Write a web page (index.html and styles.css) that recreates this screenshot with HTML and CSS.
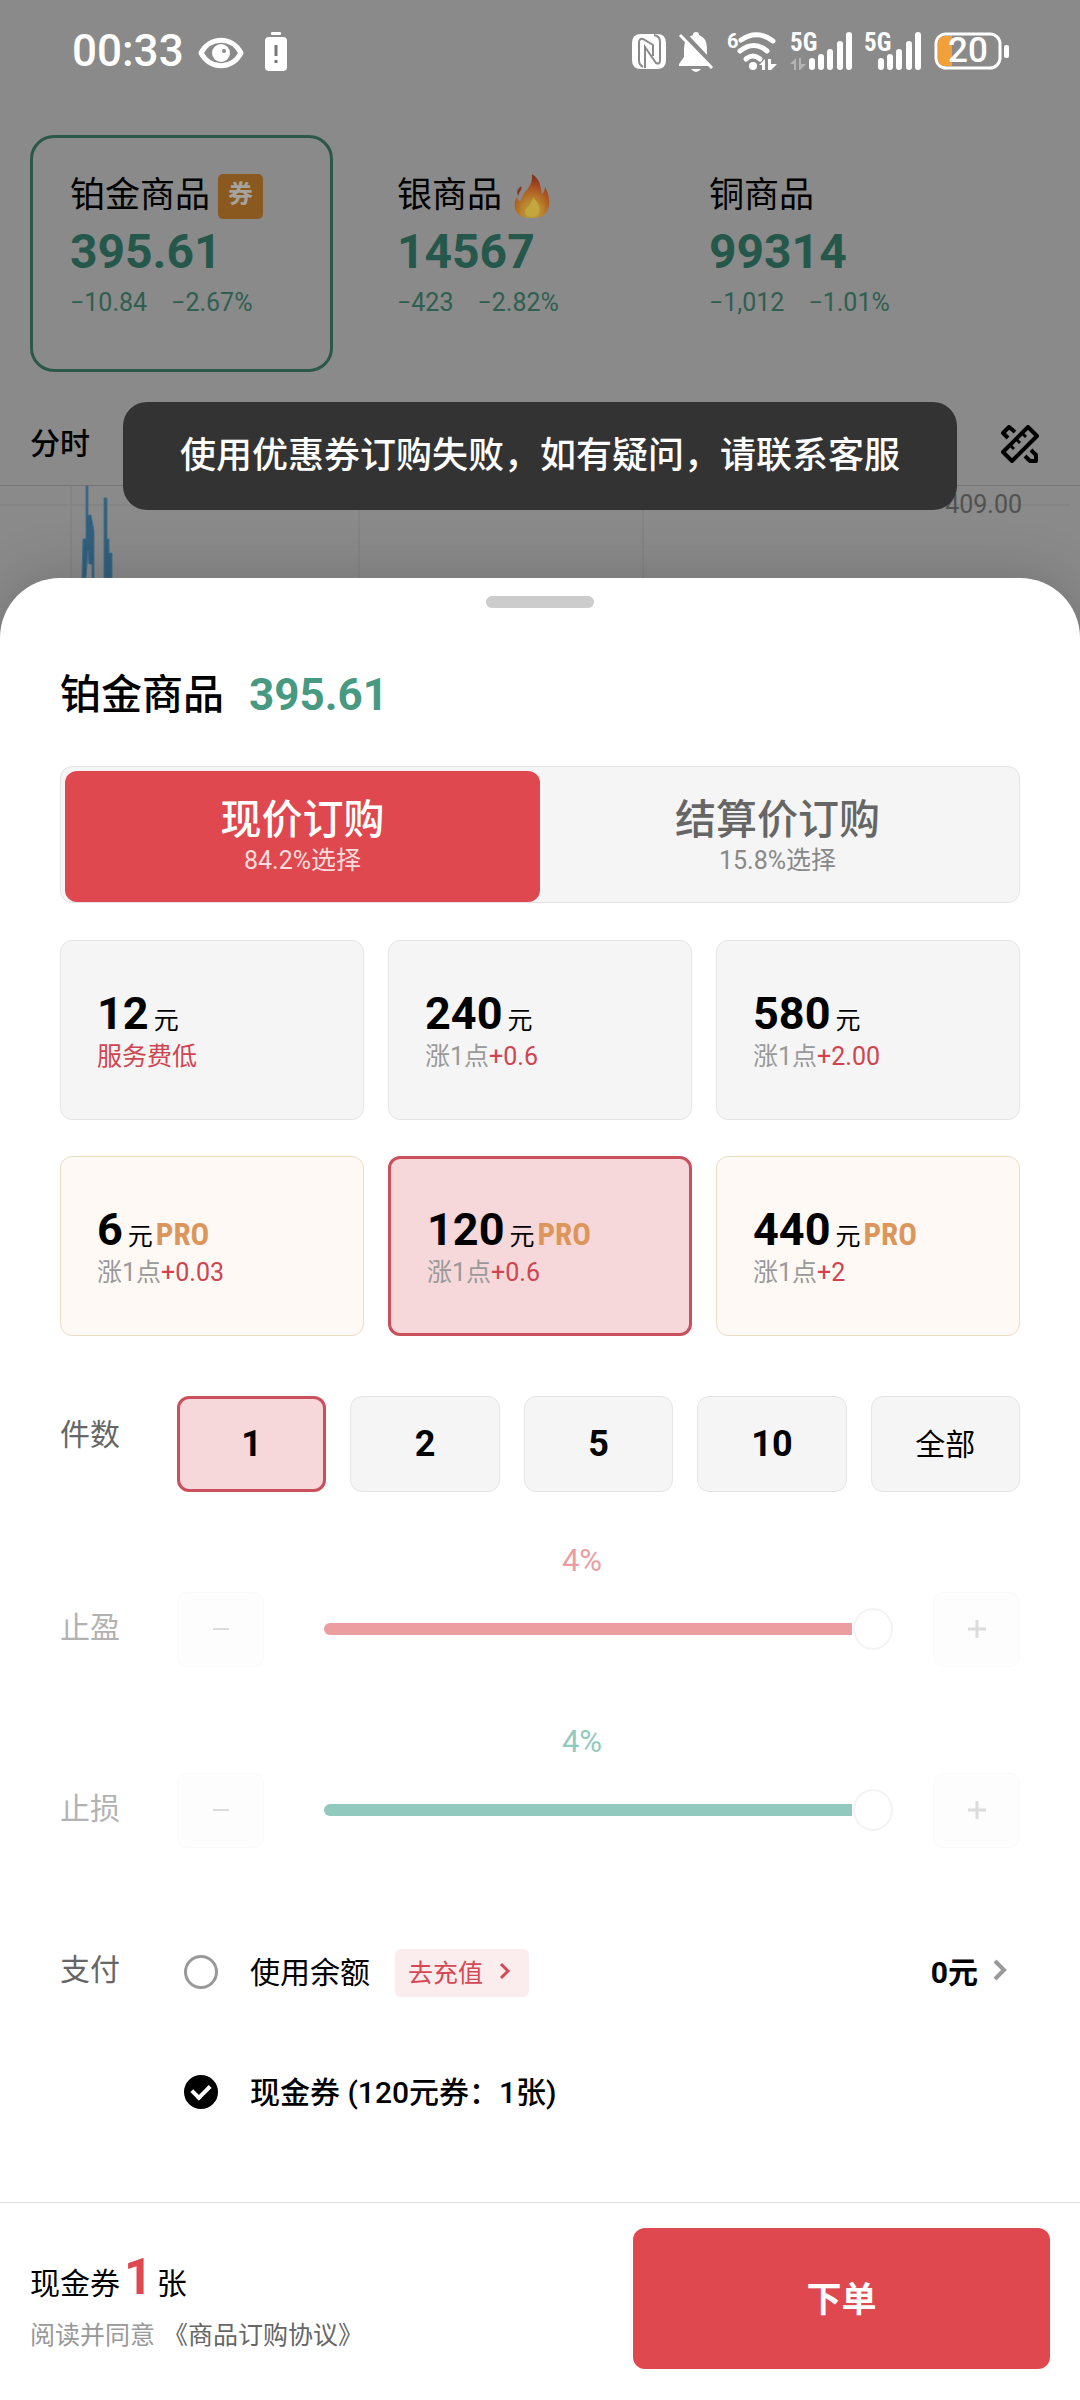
FILE: index.html
```html
<!DOCTYPE html>
<html lang="zh-CN">
<head>
<meta charset="utf-8">
<meta name="viewport" content="width=device-width, initial-scale=1">
<title>铂金商品</title>
<link rel="stylesheet" href="styles.css">
</head>
<body>
<div class="page">
  <section class="market">
    <header class="status">
      <span class="clock">00:33</span>
      <svg class="status-eye" width="46" height="42" viewBox="0 0 46 42">
        <path d="M3 23C12 6 34 6 43 23C34 40 12 40 3 23Z" fill="none" stroke="#fff" stroke-width="5" stroke-linejoin="round"/>
        <circle cx="23" cy="23" r="9" fill="#fff"/><circle cx="26" cy="21" r="2" fill="#8a8a8a"/>
      </svg>
      <svg class="status-alert" width="24" height="42" viewBox="0 0 24 42">
        <rect x="7" y="2" width="10" height="3" rx="1" fill="#fff"/><rect x="1" y="7" width="22" height="34" rx="4" fill="#fff"/>
        <path d="M12 15V26M12 30V33" stroke="#777" stroke-width="3"/>
      </svg>
      <div class="status-icons">
        <svg width="34" height="42" viewBox="0 0 34 42">
          <path d="M9 4H25Q34 4 34 13V30Q34 39 25 39H9Q0 39 0 30V13Q0 4 9 4Z" fill="#fff"/>
          <path d="M13 38V17L24 33Q28 35 28 30V12Q28 6 22 5M21 26V15L11 9Q7 8 7 13V30Q7 35 11 37" fill="none" stroke="#8a8a8a" stroke-width="2"/>
        </svg>
        <svg width="36" height="42" viewBox="0 0 36 42">
          <path d="M18 2Q21 2 21 5Q29 8 29 18V27L33 34V36H1V34L6 27V18Q6 8 15 5Q15 2 18 2Z" fill="#fff"/>
          <path d="M13 39H23Q18 45 13 39Z" fill="#fff"/>
          <path d="M4 2L37 37" stroke="#8a8a8a" stroke-width="5"/><path d="M2 5L34 38" stroke="#fff" stroke-width="3"/>
        </svg>
        <svg width="52" height="42" viewBox="0 0 52 42">
          <text x="1" y="18" class="net-small">6</text>
          <g fill="none" stroke="#fff" stroke-width="5" stroke-linecap="round">
            <path d="M15 10Q31 -1 47 11"/><path d="M14 21Q28 10 41 21"/><path d="M20 29Q27 23 34 29"/>
          </g>
          <circle cx="27" cy="36" r="4" fill="#fff"/>
          <path d="M33 35L39 29V40H36V35ZM42 29H45V34H51L45 40H42Z" fill="#fff"/>
        </svg>
        <svg width="62" height="42" viewBox="0 0 62 42">
          <text x="0" y="21" class="net">5G</text>
          <path d="M0 34L6 28V40H4V34ZM9 28H11V34H16L10 40H9Z" fill="#b4b4b4"/>
          <path d="M22 31V37M31 27V37M40 22V37M50 14V37M59 5V37" stroke="#fff" stroke-width="6" stroke-linecap="round"/>
        </svg>
        <svg width="58" height="42" viewBox="0 0 58 42">
          <text x="0" y="21" class="net">5G</text>
          <path d="M17 31V37M26 27V37M35 22V37M45 14V37M54 5V37" stroke="#fff" stroke-width="6" stroke-linecap="round"/>
        </svg>
        <svg width="76" height="42" viewBox="0 0 76 42">
          <rect x="2" y="4" width="64" height="34" rx="10" fill="none" stroke="#fff" stroke-width="3"/>
          <path d="M11 6H18V36H11Q4 36 4 29V13Q4 6 11 6Z" fill="#f2a039"/>
          <rect x="70" y="15" width="5" height="13" rx="2" fill="#fff"/>
          <text x="34" y="32" class="charge">20</text>
        </svg>
      </div>
    </header>

    <nav class="products">
      <button type="button" class="product product-active">
        <span class="product-name">铂金商品<span class="coupon">券</span></span>
        <span class="product-price">395.61</span>
        <span class="product-change"><span>−10.84</span><span>−2.67%</span></span>
      </button>
      <button type="button" class="product">
        <span class="product-name">银商品
          <svg class="fire" width="36" height="44" viewBox="0 0 36 44">
            <defs><radialGradient id="flame" cx=".5" cy=".9" r=".8"><stop offset="0" stop-color="#b9a548"/><stop offset=".4" stop-color="#b9822b"/><stop offset=".8" stop-color="#a84a20"/><stop offset="1" stop-color="#8a3420"/></radialGradient></defs>
            <path d="M18 0C28 7 26 14 28 20C30 18 31 16 31 13C38 25 37 43 22 44H13C-1 42 -1 29 3 23C3 26 5 27 7 27C9 16 19 15 18 0Z" fill="url(#flame)"/>
            <path d="M7 12C9 17 4 17 5 22C1 18 4 15 7 12Z" fill="#8a3420"/>
            <path d="M19 23C25 30 28 34 24 41Q18 45 12 41C8 35 18 32 19 23Z" fill="#c2a63e"/>
          </svg>
        </span>
        <span class="product-price">14567</span>
        <span class="product-change"><span>−423</span><span>−2.82%</span></span>
      </button>
      <button type="button" class="product">
        <span class="product-name">铜商品</span>
        <span class="product-price">99314</span>
        <span class="product-change"><span>−1,012</span><span>−1.01%</span></span>
      </button>
    </nav>

    <div class="chart-tools">
      <button type="button" class="chart-tab">分时</button>
      <button type="button" class="draw-tool" aria-label="画线工具">
        <svg width="38" height="38" viewBox="0 0 38 38" fill="none" stroke="#000" stroke-width="4">
          <path d="M2 27L27 2L36 11L11 36Z" stroke-linejoin="round"/>
          <path d="M9 20L13 24M15 14L19 18M21 8L25 12" stroke-width="3"/>
          <path d="M7 13L2 8L8 2L14 7M24 31L29 36H35V30L30 25" stroke-linejoin="round"/>
        </svg>
      </button>
    </div>
    <div class="chart">
      <svg class="chart-lines" width="1080" height="93" viewBox="0 0 1080 93">
        <path d="M0 .5H1080" stroke="#747474"/>
        <path d="M71 0V93M359 0V93M643 0V93M0 20H1070" stroke="#7e7e7e"/>
        <path d="M82 93L83 54H86V1H88V30H91L94 46V93H92V79H89L88 66L86 93ZM104 93V13H107V54H109V68H112V93Z" fill="#315f7d" stroke="#456f88"/>
      </svg>
      <span class="chart-label">409.00</span>
    </div>
  </section>

  <div class="toast" role="alert">使用优惠券订购失败，如有疑问，请联系客服</div>

  <main class="sheet">
    <div class="handle"></div>
    <form class="order" id="order">
      <h1 class="order-title">铂金商品<span class="order-price">395.61</span></h1>

      <div class="modes">
        <button type="button" class="mode mode-active"><span class="mode-name">现价订购</span><span class="mode-share">84.2%选择</span></button>
        <button type="button" class="mode"><span class="mode-name">结算价订购</span><span class="mode-share">15.8%选择</span></button>
      </div>

      <div class="amounts">
        <button type="button" class="amount"><span class="amount-value"><b>12</b>元</span><span class="amount-note"><em>服务费低</em></span></button>
        <button type="button" class="amount"><span class="amount-value"><b>240</b>元</span><span class="amount-note">涨1点<em>+0.6</em></span></button>
        <button type="button" class="amount"><span class="amount-value"><b>580</b>元</span><span class="amount-note">涨1点<em>+2.00</em></span></button>
        <button type="button" class="amount amount-pro"><span class="amount-value"><b>6</b>元<i>PRO</i></span><span class="amount-note">涨1点<em>+0.03</em></span></button>
        <button type="button" class="amount amount-pro selected"><span class="amount-value"><b>120</b>元<i>PRO</i></span><span class="amount-note">涨1点<em>+0.6</em></span></button>
        <button type="button" class="amount amount-pro"><span class="amount-value"><b>440</b>元<i>PRO</i></span><span class="amount-note">涨1点<em>+2</em></span></button>
      </div>

      <div class="field quantity">
        <span class="field-label">件数</span>
        <div class="counts">
          <button type="button" class="count selected">1</button>
          <button type="button" class="count">2</button>
          <button type="button" class="count">5</button>
          <button type="button" class="count">10</button>
          <button type="button" class="count count-all">全部</button>
        </div>
      </div>

      <div class="stop stop-profit">
        <output class="stop-value" for="profit">4%</output>
        <label class="stop-label" for="profit">止盈</label>
        <button type="button" class="step" disabled aria-label="减少止盈"><svg width="18" height="18" viewBox="0 0 18 18"><path d="M1 9H17" stroke="#dcdcdc" stroke-width="2"/></svg></button>
        <input class="slider" id="profit" type="range" min="0" max="4" value="4" disabled>
        <button type="button" class="step" disabled aria-label="增加止盈"><svg width="18" height="18" viewBox="0 0 18 18"><path d="M0 9H18M9 0V18" stroke="#dcdcdc" stroke-width="3"/></svg></button>
      </div>
      <div class="stop stop-loss">
        <output class="stop-value" for="loss">4%</output>
        <label class="stop-label" for="loss">止损</label>
        <button type="button" class="step" disabled aria-label="减少止损"><svg width="18" height="18" viewBox="0 0 18 18"><path d="M1 9H17" stroke="#dcdcdc" stroke-width="2"/></svg></button>
        <input class="slider" id="loss" type="range" min="0" max="4" value="4" disabled>
        <button type="button" class="step" disabled aria-label="增加止损"><svg width="18" height="18" viewBox="0 0 18 18"><path d="M0 9H18M9 0V18" stroke="#dcdcdc" stroke-width="3"/></svg></button>
      </div>

      <div class="field payment">
        <span class="field-label">支付</span>
        <div class="methods">
          <div class="method">
            <input class="radio" type="radio" name="pay" id="balance">
            <label for="balance">使用余额</label>
            <a class="recharge" href="#recharge">去充值<svg width="12" height="18" viewBox="0 0 12 18"><path d="M2 2L9 9L2 16" fill="none" stroke="#d54853" stroke-width="3"/></svg></a>
            <button type="button" class="balance-sum">0元<svg width="14" height="22" viewBox="0 0 14 22"><path d="M2 2L11 11L2 20" fill="none" stroke="#999" stroke-width="4"/></svg></button>
          </div>
          <div class="method method-coupon">
            <input class="radio" type="radio" name="pay" id="voucher" checked>
            <label for="voucher">现金券 (120元券：1张)</label>
          </div>
        </div>
      </div>
    </form>

    <footer class="checkout">
      <div class="summary">
        <p class="total">现金券<strong>1</strong>张</p>
        <p class="terms">阅读并同意<a href="#terms">《商品订购协议》</a></p>
      </div>
      <button type="submit" form="order" class="submit">下单</button>
    </footer>
  </main>
</div>
</body>
</html>
```
FILE: styles.css
```css
* { box-sizing: border-box; }

body {
  margin: 0;
  background: #fff;
  color: #000;
  font-family: Roboto, "Noto Sans CJK SC", sans-serif;
  font-size: 30px;
}

button {
  margin: 0;
  padding: 0;
  border: 0;
  background: none;
  color: inherit;
  font: inherit;
  text-align: left;
}

p, h1 { margin: 0; }
a { color: inherit; text-decoration: none; }
em, i { font-style: normal; }

/* The grey band also fills the area behind the sheet's round corners */
.page {
  position: relative;
  overflow: hidden;
  background: linear-gradient(#8a8a8a 640px, #fff 640px);
}

/* Dimmed market page behind the sheet */
.market { background: #8a8a8a; }

.status {
  display: flex;
  align-items: center;
  height: 102px;
  padding: 0 70px 0 72px;
  color: #fff;
}
.status svg { overflow: visible; }
.clock { font-size: 44px; font-weight: 500; }
.status-eye { margin-left: 14px; }
.status-alert { margin-left: 20px; }
.status-icons { display: flex; gap: 12px; margin-left: auto; }
.net, .net-small, .charge { fill: #fff; font-weight: 700; font-size: 25px; }
.net { font-family: "Roboto Condensed", "Liberation Sans Narrow", Roboto, sans-serif; }
.net-small { font-size: 20px; }
.charge { font-size: 35px; font-weight: 500; text-anchor: middle; }

.products {
  display: grid;
  grid-template-columns: 303fr 288fr 381fr;
  gap: 24px;
  padding: 33px 30px 0;
}
.product {
  display: flex;
  flex-direction: column;
  height: 237px;
  padding: 34px 37px;
  border: 3px solid transparent;
  border-radius: 24px;
}
.product-active { border-color: #2b5848; }
.product-name {
  display: flex;
  align-items: center;
  height: 48px;
  font-size: 35px;
  line-height: 48px;
  white-space: nowrap;
}
.coupon {
  width: 45px;
  height: 45px;
  margin-left: 8px;
  border-radius: 5px;
  background: #89591f;
  color: #a6a29c;
  font-size: 25px;
  font-weight: 700;
  line-height: 41px;
  text-align: center;
}
.fire { margin-left: 12px; }
.product-price { color: #25584a; font-size: 48px; font-weight: 700; line-height: 64px; }
.product-change { display: flex; gap: 24px; color: #2f5f50; font-size: 25px; line-height: 38px; }

.chart-tools {
  display: flex;
  align-items: center;
  justify-content: space-between;
  height: 113px;
  padding: 30px 41px 0 30px;
}
.chart-tab { font-weight: 500; line-height: 60px; }
.draw-tool { line-height: 0; }
.chart {
  display: flex;
  justify-content: flex-end;
  position: relative;
  height: 93px;
  padding: 2px 58px 0 0;
  overflow: hidden;
}
.chart-lines { position: absolute; top: 0; left: 0; }
.chart-label { position: relative; color: #515151; font-size: 25px; line-height: 36px; }

.toast {
  position: absolute;
  top: 402px;
  right: 0;
  left: 0;
  z-index: 2;
  width: fit-content;
  margin: 0 auto;
  padding: 0 57px;
  border-radius: 24px;
  background: #333;
  color: #fff;
  font-size: 36px;
  font-weight: 500;
  line-height: 108px;
}

/* Order sheet */
.sheet {
  position: relative;
  padding-top: 18px;
  border-radius: 60px 60px 0 0;
  background: #fff;
  box-shadow: 0 0 60px rgba(0, 0, 0, .18);
}
.handle { width: 108px; height: 12px; margin: 0 auto; border-radius: 6px; background: #ccc; }
.order { padding: 57px 60px 86px; }
.order-title { display: flex; gap: 25px; font-size: 41px; font-weight: 500; line-height: 60px; }
.order-price { color: #489982; font-size: 44px; font-weight: 700; }

.modes {
  display: grid;
  grid-template-columns: 1fr 1fr;
  height: 137px;
  margin-top: 41px;
  padding: 4px 4px 0;
  border: 1px solid #e4e4e4;
  border-radius: 12px;
  background: #f5f5f5;
}
.mode {
  display: flex;
  flex-direction: column;
  align-items: center;
  justify-content: center;
  padding-top: 5px;
  border-radius: 12px;
  color: #666;
}
.mode-name { font-size: 41px; font-weight: 500; line-height: 44px; }
.mode-share { color: #888; font-size: 25px; line-height: 38px; }
.mode-active { background: #de484e; color: #fff; }
.mode-active .mode-share { color: #fbdcdc; }

.amounts { display: grid; grid-template-columns: repeat(3, 1fr); gap: 36px 24px; margin-top: 37px; }
.amount {
  display: flex;
  flex-direction: column;
  justify-content: center;
  height: 180px;
  padding: 5px 36px 0;
  border: 1px solid #e4e4e4;
  border-radius: 12px;
  background: #f5f5f5;
}
.amount-value { display: flex; align-items: baseline; height: 48px; font-size: 25px; line-height: 48px; }
.amount-value b { margin-right: 5px; font-size: 45px; }
.amount-value i {
  margin-left: 3px;
  color: #dc965c;
  font-family: "Roboto Condensed", "Liberation Sans Narrow", Roboto, sans-serif;
  font-size: 31px;
  font-weight: 700;
}
.amount-note { color: #999; font-size: 25px; line-height: 38px; }
.amount-note em { color: #d04450; }
.amount-pro { border-color: #ecdcc4; background: #fef9f5; }
.selected { border: 3px solid #c9505c; background: #f6d8da; }

.field { display: flex; }
.field-label { width: 117px; flex: none; color: #666; line-height: 44px; }
.quantity { margin-top: 60px; }
.quantity .field-label { padding-top: 17px; }
.counts { display: grid; flex: 1; grid-template-columns: repeat(5, 1fr); gap: 24px; }
.count {
  height: 96px;
  border: 1px solid #e4e4e4;
  border-radius: 12px;
  background: #f5f5f5;
  font-size: 36px;
  font-weight: 700;
  text-align: center;
}
.count.selected { border: 3px solid #c9505c; background: #f6d8da; }
.count-all { padding-bottom: 4px; font-size: 30px; font-weight: 400; }

.stop {
  display: grid;
  grid-template-columns: 117px 87px 1fr 87px;
  grid-template-rows: 44px 75px;
  row-gap: 9px;
  align-items: center;
  padding: 47px 0 6px;
}
.stop-value { grid-column: 3; padding-right: 33px; font-size: 31px; line-height: 44px; text-align: center; }
.stop-label { grid-column: 1; padding-bottom: 4px; color: #b2b2b2; line-height: 44px; }
.step {
  display: flex;
  align-items: center;
  justify-content: center;
  height: 75px;
  padding-bottom: 2px;
  border: 1px solid #fafafa;
  border-radius: 10px;
  background: #fdfdfd;
}
.slider { appearance: none; height: 42px; margin: 0 40px 2px 60px; background: none; }
.slider::-webkit-slider-runnable-track {
  height: 12px;
  border-radius: 6px 0 0 6px;
  background: linear-gradient(currentColor, currentColor) no-repeat left / calc(100% - 41px) 100%;
}
.slider::-webkit-slider-thumb {
  appearance: none;
  width: 40px;
  height: 42px;
  margin-top: -15px;
  border: 2px solid #f5f2f3;
  border-radius: 50%;
  background: #fff;
}
.stop-profit .stop-value, .stop-profit .slider { color: #eb9da0; }
.stop-loss .stop-value, .stop-loss .slider { color: #92c9be; }

.payment { margin-top: 94px; }
.methods { display: flex; flex: 1; flex-direction: column; gap: 72px; }
.method { display: flex; align-items: center; height: 48px; }
.method label { padding-bottom: 4px; }
.method-coupon { font-weight: 500; }
.radio {
  display: flex;
  align-items: center;
  justify-content: center;
  width: 34px;
  height: 34px;
  margin: 0 32px 0 7px;
  appearance: none;
  border: 3px solid #999;
  border-radius: 50%;
}
.radio:checked { border-color: #000; background: #000; }
.radio:checked::before {
  width: 14px;
  height: 8px;
  margin-bottom: 5px;
  border: solid #fff;
  border-width: 0 0 4px 4px;
  content: "";
  transform: rotate(-45deg);
}
.recharge {
  display: flex;
  align-items: center;
  gap: 16px;
  height: 48px;
  margin: 2px 0 0 25px;
  padding: 0 18px 4px 13px;
  border-radius: 6px;
  background: #fbedee;
  color: #d54853;
  font-size: 25px;
}
.balance-sum {
  display: flex;
  align-items: center;
  gap: 15px;
  margin-left: auto;
  padding: 0 13px 4px 0;
  font-weight: 700;
}

.checkout {
  display: flex;
  justify-content: space-between;
  padding: 25px 30px 31px;
  border-top: 1px solid #e0e0e0;
}
.summary { padding-top: 19px; }
.total { display: flex; align-items: baseline; height: 60px; line-height: 60px; }
.total strong { margin: 0 4px; color: #de484e; font-size: 50px; }
.terms { display: flex; gap: 8px; margin-top: 9px; color: #999; font-size: 25px; line-height: 40px; }
.terms a { color: #666; }
.submit {
  width: 417px;
  height: 141px;
  padding-bottom: 4px;
  border-radius: 12px;
  background: #de484e;
  color: #fff;
  font-size: 35px;
  font-weight: 700;
  text-align: center;
}
```
